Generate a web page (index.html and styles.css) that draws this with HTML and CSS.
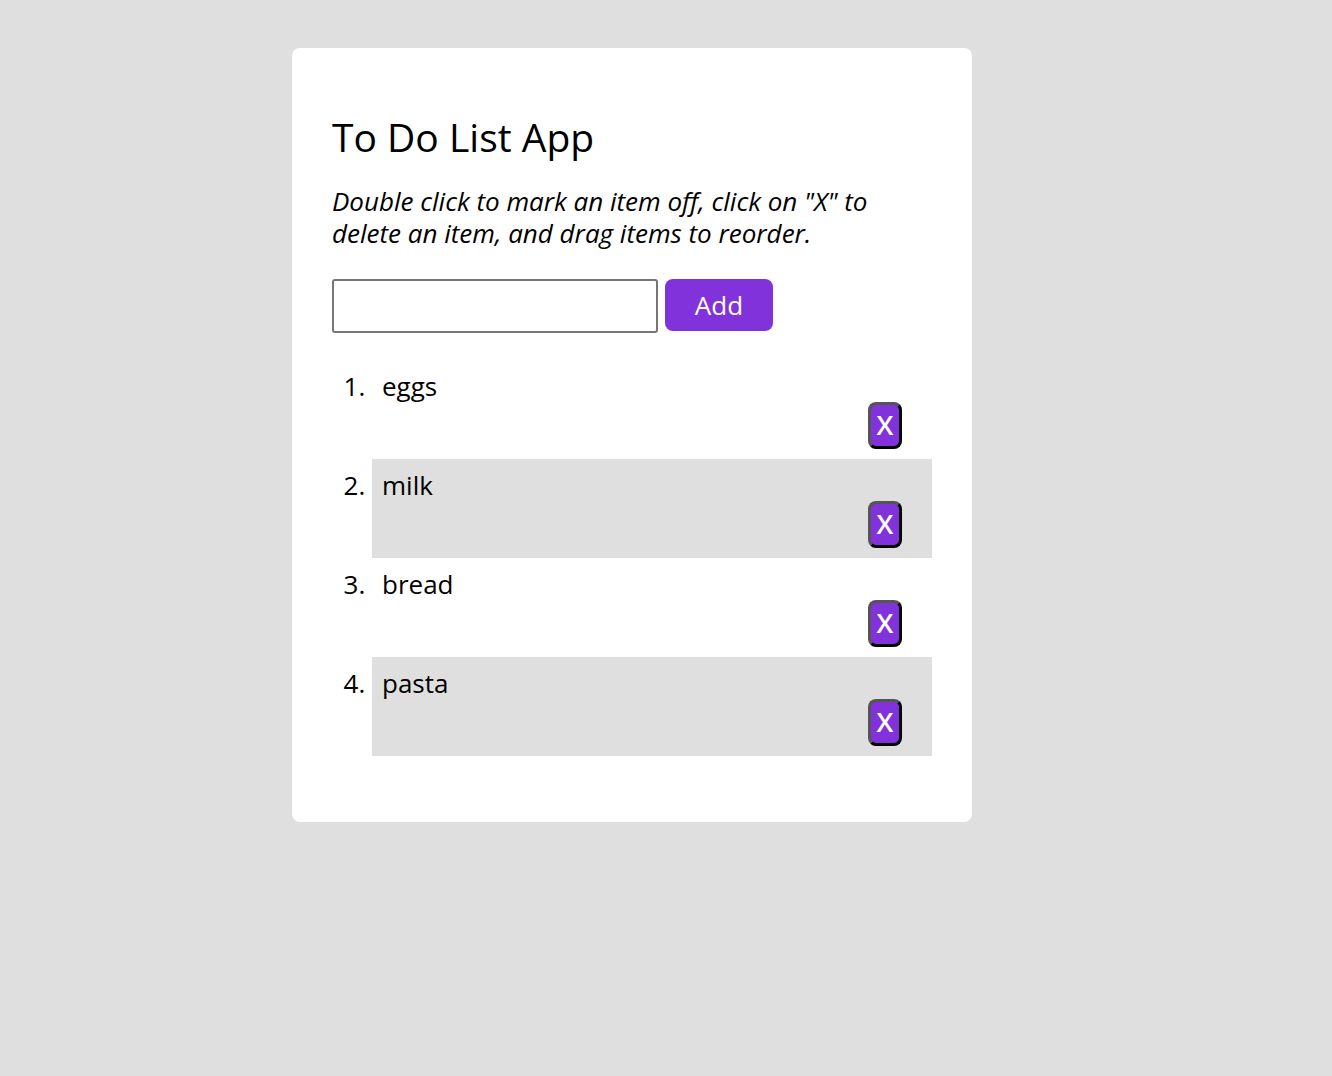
FILE: index.html
```
<!DOCTYPE html>
<html>
<head>
<meta charset="utf-8">
<title>To Do List App</title>
<link rel="stylesheet" href="styles.css">
</head>
<body>
<main class="card">
  <h1 class="title">To Do List App</h1>
  <p class="hint">Double click to mark an item off, click on "X" to delete an item, and drag items to reorder.</p>
  <form class="add-form">
    <input class="add-input" type="text">
    <button class="add-btn" type="button">Add</button>
  </form>
  <ol class="list">
    <li class="item"><span class="item-text">eggs</span><div class="del-row"><button class="del-btn" type="button">X</button></div></li>
    <li class="item"><span class="item-text">milk</span><div class="del-row"><button class="del-btn" type="button">X</button></div></li>
    <li class="item"><span class="item-text">bread</span><div class="del-row"><button class="del-btn" type="button">X</button></div></li>
    <li class="item"><span class="item-text">pasta</span><div class="del-row"><button class="del-btn" type="button">X</button></div></li>
  </ol>
</main>
</body>
</html>
```
FILE: styles.css
```
html, body {
  margin: 0;
  padding: 0;
}
body {
  background: #dfdfdf;
  font-family: "Open Sans", "Liberation Sans", sans-serif;
  font-size: 26px;
  color: #000;
  padding-top: 48px;
  min-height: 1076px;
  box-sizing: border-box;
}
.card {
  width: 680px;
  box-sizing: border-box;
  margin: 0 auto 0 292px;
  background: #fff;
  border-radius: 8px;
  padding: 40px 40px 66px;
  overflow: hidden;
}
.title {
  font-size: 39px;
  font-weight: 400;
  line-height: 49px;
  margin: 24px 0 24px;
}
.hint {
  font-style: italic;
  line-height: 32px;
  margin: 0 0 30px;
  padding-right: 40px;
}
.add-form {
  display: flex;
  align-items: flex-start;
  gap: 7px;
  margin: 0;
}
.add-input {
  width: 326px;
  height: 54px;
  box-sizing: border-box;
  border: 2px solid #767676;
  border-radius: 3px;
  font: inherit;
  margin: 0;
}
.add-btn {
  width: 108px;
  height: 52px;
  border: none;
  border-radius: 8px;
  background: #8132db;
  color: #fff;
  font-family: "Open Sans", "Liberation Sans", sans-serif;
  font-size: 26px;
  padding: 0;
}
.list {
  margin: 27px 0 0;
  padding-left: 40px;
}
.item {
  padding: 10px;
  height: 99px;
  box-sizing: border-box;
  line-height: 33px;
}
.item:nth-child(even) {
  background: #dfdfdf;
}
.del-row {
  display: flex;
  justify-content: flex-end;
  padding-right: 20px;
}
.del-btn {
  width: 34px;
  height: 47px;
  box-sizing: border-box;
  border: 3px solid #555;
  border-right-color: #000;
  border-bottom-color: #000;
  border-radius: 8px;
  background: #8132db;
  color: #fff;
  font-family: "Open Sans", "Liberation Sans", sans-serif;
  font-size: 27px;
  font-weight: 600;
  line-height: 1;
  padding: 0 0 3px;
  margin-top: -1px;
}
```
